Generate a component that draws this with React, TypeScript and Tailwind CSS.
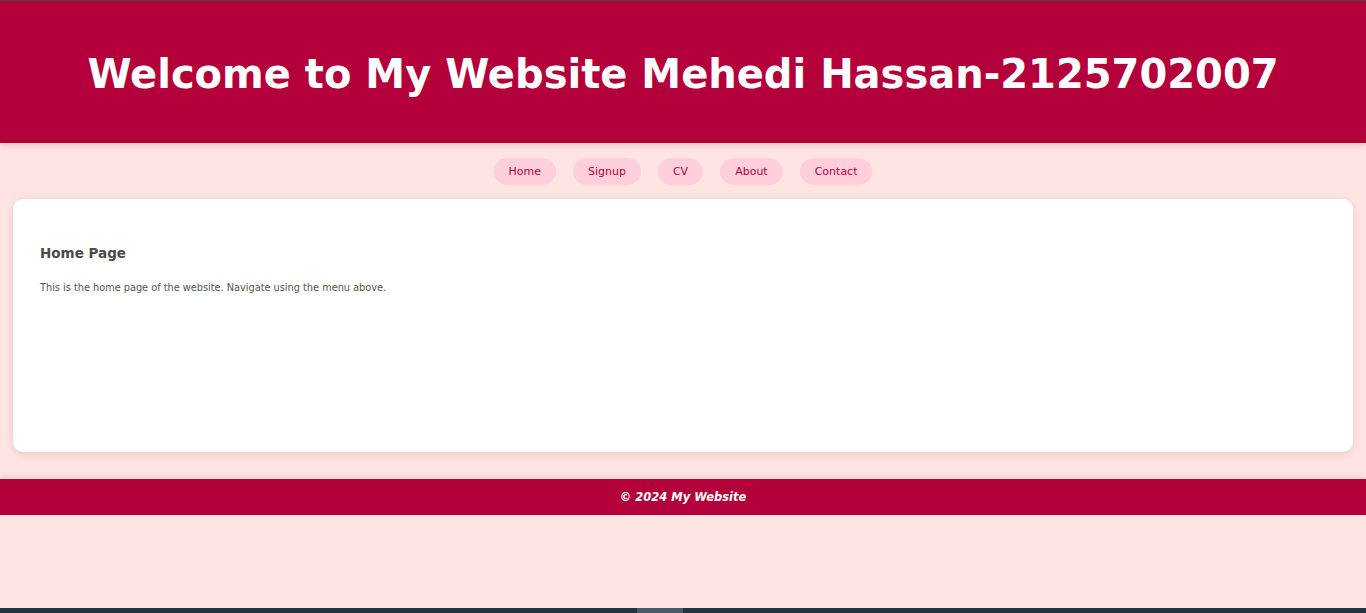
import React from 'react';

const links = ['Home', 'Signup', 'CV', 'About', 'Contact'];

export default function App() {
  return (
    <div
      className="flex min-h-[613px] flex-col bg-[#ffe4e4]"
      style={{ fontFamily: '"Comic Sans MS", "DejaVu Sans", sans-serif' }}
    >
      <div className="h-px bg-[#4a4a4a]" />
      {/* header */}
      <header className="flex h-[142px] items-center justify-center bg-[#b4003a] pt-[4px] shadow-[0_2px_6px_rgba(0,0,0,0.15)]">
        <h1 className="text-[40px] font-bold text-white">
          Welcome to My Website Mehedi Hassan-2125702007
        </h1>
      </header>

      {/* nav */}
      <nav className="flex justify-center gap-[17px] pt-[15px]">
        {links.map(l => (
          <a
            key={l}
            className="flex h-[27px] items-center rounded-full bg-[#ffcfdc] px-[15px] pt-[2px] text-[11px] text-[#b4003a]"
          >
            {l}
          </a>
        ))}
      </nav>

      {/* content */}
      <main className="mx-[13px] mt-[14px] h-[253px] rounded-[10px] bg-white px-[27px] pt-[44px] shadow-[0_2px_8px_rgba(0,0,0,0.12)]">
        <h2 className="text-[13.5px] font-bold text-[#4a4a4a]">Home Page</h2>
        <p className="mt-[18px] text-[9.75px] text-[#555]">
          This is the home page of the website. Navigate using the menu above.
        </p>
      </main>

      {/* footer */}
      <footer className="mt-[27px] flex h-[36px] items-center justify-center bg-[#b4003a] pt-[2px] shadow-[0_-2px_6px_rgba(0,0,0,0.1)]">
        <span className="text-[11.5px] font-bold italic text-white">© 2024 My Website</span>
      </footer>

      <div className="mt-auto flex h-[5px] bg-[#223540]">
        <div className="w-[637px]" />
        <div className="w-[46px] bg-[#4a5a63]" />
      </div>
    </div>
  );
}
